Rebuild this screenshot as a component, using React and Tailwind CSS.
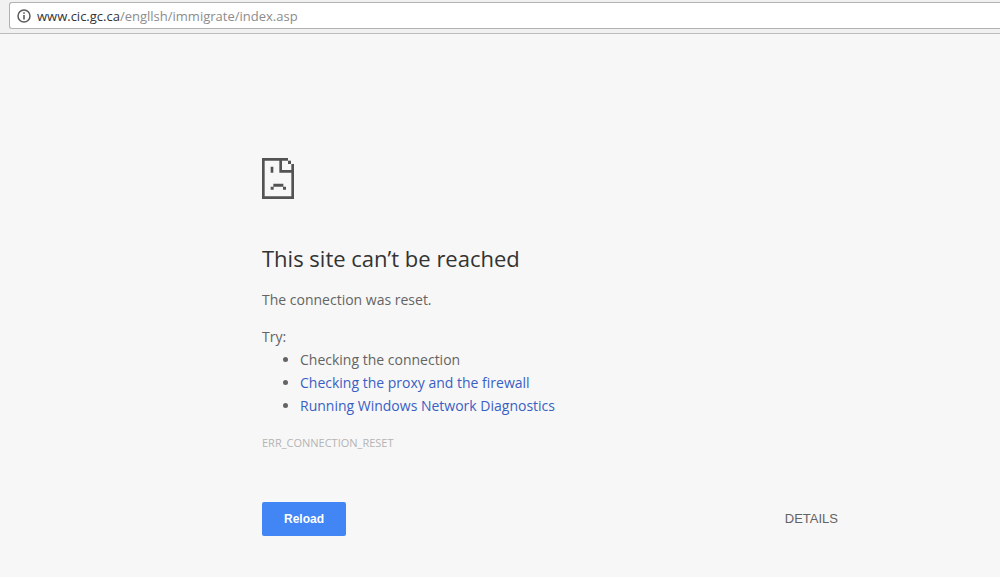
import React from 'react';

const suggestions = [
  { text: 'Checking the connection' },
  { text: 'Checking the proxy and the firewall', href: '#proxy' },
  { text: 'Running Windows Network Diagnostics', href: '#diagnostics' },
];

function InfoIcon() {
  return (
    <svg className="w-3.5 h-3.5 shrink-0" viewBox="0 0 14 14" aria-hidden="true">
      <circle cx="7" cy="7" r="6" fill="none" stroke="#5a5a5a" strokeWidth="1.5" />
      <path d="M6.2 3.3h1.6v1.5H6.2zM6.2 6h1.6v4.6H6.2z" fill="#5a5a5a" />
    </svg>
  );
}

function SadPageIcon() {
  return (
    <svg className="w-8 h-[41px]" viewBox="0 0 96 123" fill="#535353" aria-hidden="true">
      {/* Page outline and folded corner */}
      <path d="M0 0H78V8H60V36H88V18H96V123H0ZM8 8V115H88V44H52V8Z" fillRule="evenodd" />
      <path d="M78 8H87V18H78Z" />
      {/* Face */}
      <path d="M26 26H34V44H26ZM34 77H64V86H34ZM26 86H35V95H26ZM63 86H72V95H63Z" />
    </svg>
  );
}

function AddressBar() {
  return (
    <header className="bg-[#f1f1f1] border-b border-[#bdbdbd] pt-0.5 pb-1 pl-[9px]">
      <div className="flex items-center h-[27px] pl-[7px] bg-white border border-r-0 border-[#b2b2b2] rounded-l-[3px]">
        <InfoIcon />
        <div className="ml-[6px] text-[13px] leading-5 text-[#8c8c8c]">
          <span className="text-[#333333]">www.cic.gc.ca</span>/engllsh/immigrate/index.asp
        </div>
      </div>
    </header>
  );
}

function App() {
  return (
    <div className="min-h-screen bg-[#f7f7f7] font-['Open_Sans','Noto_Sans',sans-serif] text-[14px] leading-[23px] text-[#646464]">
      <AddressBar />

      <main className="pl-[100px] pt-[124px]">
        <div className="max-w-xl mx-auto">
          <SadPageIcon />

          <h1 className="mt-11 mb-[15px] text-[22px] leading-[30px] text-[#333333]">This site can’t be reached</h1>
          <p>The connection was reset.</p>

          <p className="mt-3.5">Try:</p>
          <ul className="list-disc pl-[38px]">
            {suggestions.map((item) => (
              <li key={item.text}>
                {item.href ? (
                  <a href={item.href} className="text-[#3a5fc4]">{item.text}</a>
                ) : (
                  item.text
                )}
              </li>
            ))}
          </ul>

          <p className="mt-3.5 text-[11px] text-[#b4b4b4]">ERR_CONNECTION_RESET</p>

          {/* Buttons */}
          <div className="mt-12 flex justify-between items-center font-['Liberation_Sans',Arial,sans-serif] text-[13px] leading-4">
            <button type="button" className="w-[84px] h-[34px] rounded-xs bg-[#4285f4] text-white text-[12px] font-bold">
              Reload
            </button>
            <button type="button" className="h-[34px]">
              DETAILS
            </button>
          </div>
        </div>
      </main>
    </div>
  );
}

export default App;
